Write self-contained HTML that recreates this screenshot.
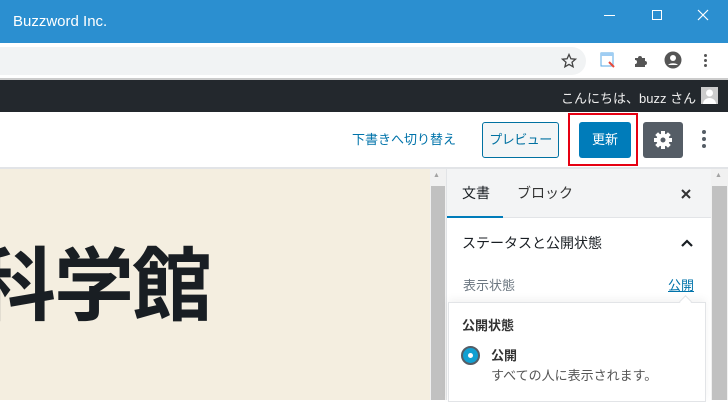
<!DOCTYPE html>
<html><head><meta charset="utf-8"><style>
*{margin:0;padding:0;box-sizing:border-box}
body{width:728px;height:400px;overflow:hidden;position:relative;background:#fff;font-family:"Liberation Sans","Noto Sans CJK JP",sans-serif}
.a{position:absolute}
.t{white-space:nowrap}
</style></head><body>
<div class="a" style="left:0;top:0;width:728px;height:43px;background:#2b8fd0"></div>
<div class="a t" style="left:13px;top:13px;color:#fff;font-size:15px">Buzzword Inc.</div>
<div class="a" style="left:604px;top:15px;width:11px;height:1px;background:#fff"></div>
<div class="a" style="left:652px;top:10px;width:10px;height:10px;border:1px solid #fff"></div>
<svg class="a" style="left:697px;top:9px" width="12" height="12"><path d="M1 1L11 11M11 1L1 11" stroke="#fff" stroke-width="1.2"/></svg>
<div class="a" style="left:0;top:47px;width:586px;height:28px;background:#f1f3f4;border-radius:0 14px 14px 0"></div>
<svg class="a" style="left:561px;top:53px" width="16" height="16"><path d="M8 1.5l1.9 4.3 4.6.4-3.5 3 1.1 4.6L8 11.4l-4.1 2.4 1.1-4.6-3.5-3 4.6-.4z" fill="none" stroke="#444" stroke-width="1.3"/></svg>
<svg class="a" style="left:600px;top:52px" width="16" height="18"><rect x="1" y="1" width="12" height="13" fill="#fff" stroke="#5aa9e6"/><rect x="1" y="1" width="12" height="3" fill="#9fcdf3"/><path d="M9 10l5 5" stroke="#e64a3b" stroke-width="2"/></svg>
<svg class="a" style="left:633px;top:53px" width="16" height="16"><path d="M2 5h3a2 2 0 1 1 4 0h3v3a2 2 0 1 1 0 4v2H2v-3a2 2 0 1 0 0-4z" fill="#555"/></svg>
<svg class="a" style="left:664px;top:51px" width="18" height="18"><circle cx="9" cy="9" r="8.5" fill="#555"/><circle cx="9" cy="7" r="3" fill="#fff"/><path d="M4 14a6 4 0 0 1 10 0" fill="#fff"/></svg>
<div class="a" style="left:704px;top:54px;width:3px;height:3px;background:#555;border-radius:2px;box-shadow:0 5px #555,0 10px #555"></div>
<div class="a" style="left:0;top:78px;width:728px;height:2px;background:#ccc"></div>
<div class="a" style="left:0;top:80px;width:728px;height:32px;background:#23282d"></div>
<div class="a t" style="left:561px;top:88px;color:#eee;font-size:13px">こんにちは、buzz さん</div>
<div class="a" style="left:701px;top:87px;width:17px;height:17px;background:#ccc"><svg width="17" height="17"><circle cx="8.5" cy="6" r="3.5" fill="#fff"/><path d="M2 17a6.5 6 0 0 1 13 0z" fill="#fff"/></svg></div>
<div class="a" style="left:0;top:167px;width:728px;height:2px;background:#e2e4e7"></div>
<div class="a t" style="left:352px;top:129px;color:#0073aa;font-size:13px">下書きへ切り替え</div>
<div class="a t" style="left:482px;top:122px;width:77px;height:36px;border:1px solid #0071a1;border-radius:3px;color:#0071a1;font-size:13px;text-align:center;line-height:34px;background:#f3f5f6;letter-spacing:-0.5px">プレビュー</div>
<div class="a t" style="left:579px;top:122px;width:52px;height:36px;background:#007cba;border-radius:3px;color:#fff;font-size:13px;text-align:center;line-height:36px">更新</div>
<div class="a" style="left:568px;top:113px;width:70px;height:53px;border:2px solid #e60012"></div>
<div class="a" style="left:643px;top:122px;width:40px;height:36px;background:#555d66;border-radius:3px"><svg width="40" height="36"><g transform="translate(20 18)" fill="#fff"><circle r="6.5"/><rect x="-2" y="-9" width="4" height="18"/><rect x="-2" y="-9" width="4" height="18" transform="rotate(45)"/><rect x="-2" y="-9" width="4" height="18" transform="rotate(90)"/><rect x="-2" y="-9" width="4" height="18" transform="rotate(135)"/><circle r="2.5" fill="#555d66"/></g></svg></div>
<div class="a" style="left:702px;top:130px;width:4px;height:4px;background:#555d66;border-radius:2px;box-shadow:0 7px #555d66,0 14px #555d66"></div>
<div class="a" style="left:0;top:169px;width:430px;height:231px;background:#f4eee0"></div>
<div class="a t" style="left:-24px;top:222px;font-size:80px;font-weight:bold;color:#191e23;letter-spacing:-2px">科学館</div>
<div class="a" style="left:430px;top:169px;width:16px;height:231px;background:#f1f1f1"></div>
<div class="a" style="left:431px;top:186px;width:14px;height:214px;background:#c1c1c1"></div>
<div class="a t" style="left:433px;top:172px;font-size:7px;color:#a3a3a3">▲</div>
<div class="a" style="left:711px;top:169px;width:17px;height:231px;background:#f1f1f1"></div>
<div class="a" style="left:712px;top:186px;width:15px;height:214px;background:#c1c1c1"></div>
<div class="a t" style="left:715px;top:172px;font-size:7px;color:#a3a3a3">▲</div>
<div class="a" style="left:446px;top:169px;width:265px;height:231px;background:#fff;border-left:1px solid #e2e4e7"></div>
<div class="a" style="left:447px;top:169px;width:264px;height:49px;background:#f3f4f5;border-bottom:1px solid #e2e4e7"></div>
<div class="a" style="left:447px;top:216px;width:56px;height:2px;background:#007cba"></div>
<div class="a t" style="left:462px;top:183px;font-size:14px;color:#191e23">文書</div>
<div class="a t" style="left:517px;top:183px;font-size:14px;color:#333">ブロック</div>
<svg class="a" style="left:681px;top:189px" width="10" height="10"><path d="M1 1L9 9M9 1L1 9" stroke="#333" stroke-width="2"/></svg>
<div class="a t" style="left:462px;top:233px;font-size:14px;color:#191e23">ステータスと公開状態</div>
<svg class="a" style="left:681px;top:239px" width="12" height="8"><path d="M1 7L6 2L11 7" stroke="#191e23" stroke-width="2.2" fill="none"/></svg>
<div class="a t" style="left:463px;top:275px;font-size:13px;color:#6c7781">表示状態</div>
<div class="a t" style="left:668px;top:275px;font-size:13px;color:#0073aa;text-decoration:underline">公開</div>
<div class="a" style="left:448px;top:302px;width:258px;height:100px;border:1px solid #e2e4e7;background:#fff;box-shadow:0 -3px 8px rgba(0,0,0,.05)"></div>
<div class="a" style="left:681px;top:297px;width:9px;height:9px;background:#fff;border-left:1px solid #e2e4e7;border-top:1px solid #e2e4e7;transform:rotate(45deg)"></div>
<div class="a t" style="left:462px;top:315px;font-size:13px;font-weight:bold;color:#333">公開状態</div>
<div class="a" style="left:461px;top:346px;width:19px;height:19px;border-radius:50%;background:#11a0d2;border:2px solid #555d66"></div>
<div class="a" style="left:468px;top:353px;width:5px;height:5px;border-radius:50%;background:#fff"></div>
<div class="a t" style="left:491px;top:345px;font-size:13px;font-weight:bold;color:#333">公開</div>
<div class="a t" style="left:491px;top:365px;font-size:13px;color:#555">すべての人に表示されます。</div>
</body></html>
